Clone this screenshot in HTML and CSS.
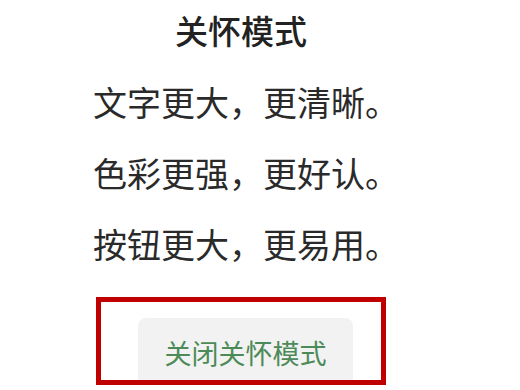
FILE: index.html
```html
<!DOCTYPE html>
<html lang="zh-CN">
<head>
    <meta charset="UTF-8">
    <meta name="viewport" content="width=device-width, initial-scale=1.0">
    <title>关怀模式</title>
    <link rel="stylesheet" href="styles.css">
</head>
<body>
    <div class="page">
        <h1 class="title">关怀模式</h1>
        <ul class="features">
            <li>文字更大，更清晰。</li>
            <li>色彩更强，更好认。</li>
            <li>按钮更大，更易用。</li>
        </ul>
        <div class="highlight">
            <button class="btn-close">关闭关怀模式</button>
        </div>
    </div>
</body>
</html>
```

FILE: styles.css
```css
* {
    margin: 0;
    padding: 0;
    box-sizing: border-box;
}
body {
    font-family: "Noto Sans CJK SC", "Noto Sans", sans-serif;
    background-color: #fff;
    color: #2a2a2a;
    width: 520px;
    height: 390px;
    overflow: hidden;
}
.page {
    width: 482px;
    display: flex;
    flex-direction: column;
    align-items: center;
}
.title {
    margin-top: 10px;
    font-size: 33px;
    line-height: 40px;
    font-weight: 500;
    color: #222;
}
.features {
    list-style: none;
    margin-top: 16px;
    padding-left: 10px;
    text-align: center;
}
.features li {
    font-size: 34px;
    line-height: 71px;
}
.highlight {
    margin-top: 18px;
    width: 290px;
    height: 88px;
    border: 5px solid #c00000;
    overflow: hidden;
    padding-top: 16px;
    padding-left: 37px;
}
.btn-close {
    width: 215px;
    height: 80px;
    padding-top: 18px;
    border: none;
    border-radius: 8px;
    background-color: #f2f2f2;
    color: #4c8a58;
    font-family: inherit;
    font-size: 27px;
    line-height: 34px;
    display: flex;
    justify-content: center;
    align-items: flex-start;
}
```
